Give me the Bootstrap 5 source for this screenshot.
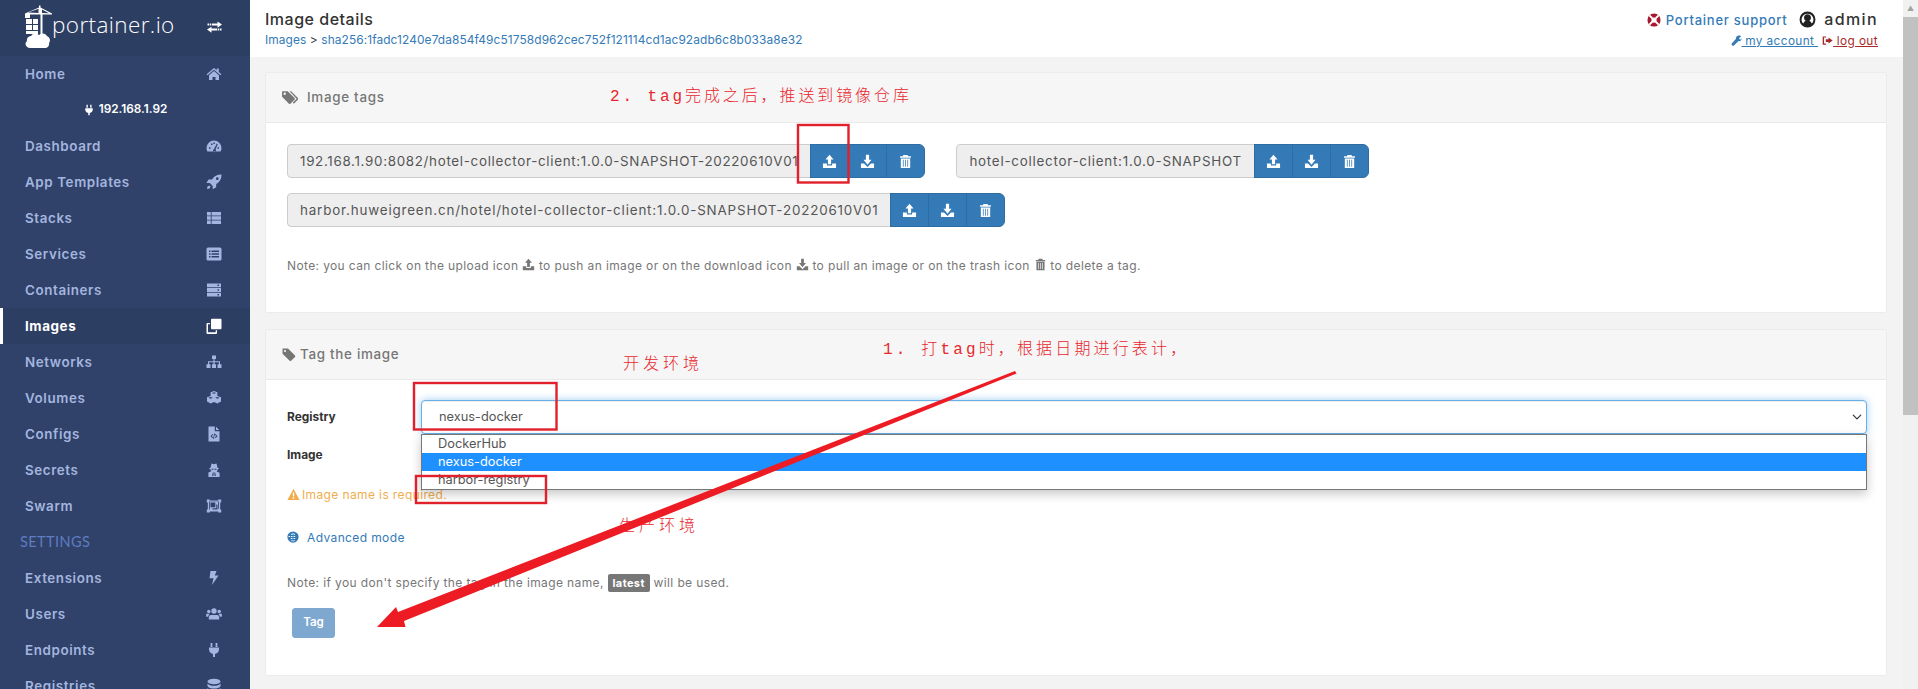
<!DOCTYPE html>
<html lang="en">
<head>
<meta charset="utf-8">
<title>Portainer - Image details</title>
<link href="https://cdn.jsdelivr.net/npm/bootstrap@5.3.0/dist/css/bootstrap.min.css" rel="stylesheet">
<style>
html,body{height:689px;overflow:hidden;margin:0}
body{background:#f3f3f3;font-family:Inter,"Noto Sans",sans-serif;font-size:12px;color:#333;position:relative}
.pt-shell{height:689px}
.pt-side{width:250px;background:#30426a;flex:none;overflow:hidden}
.pt-brand{height:56px;background:#2d3e63;color:#fff;padding-left:25px;padding-right:27px;flex:none}
.pt-brand-name{font-family:"Open Sans",sans-serif;font-weight:300;font-size:22.5px;line-height:1;margin-left:-1px;margin-top:-6px;letter-spacing:.4px}
.pt-item{height:36px;padding:0 28px 0 25px;color:#a4b5df;font-weight:600;font-size:13.4px;letter-spacing:.6px;text-decoration:none;flex:none}
.pt-item svg{width:16px;height:16px;fill:currentColor}
.pt-item.pt-active{background:#2d3e63;color:#fff;border-left:3px solid #fff;padding-left:22px;font-weight:700}
.pt-endpoint{height:36px;color:#fff;font-weight:600;font-size:11.8px;padding-left:0;flex:none}
.pt-endpoint svg{width:12px;height:14px;fill:#fff;margin-right:4px}
.pt-heading{height:36px;padding-left:20px;color:#5e7cc0;font-family:Lato,sans-serif;font-size:14.5px;letter-spacing:.4px;flex:none}
.pt-main{min-width:0}
.pt-top{height:57px;background:#fff;padding:10px 25px 0 15px;flex:none}
.pt-title{font-size:16px;font-weight:500;line-height:18px;color:#333;letter-spacing:.5px}
.pt-crumb{font-size:11.9px;line-height:18px;margin-top:3px;letter-spacing:.1px}
.pt-crumb a,.pt-blue{color:#337ab7;text-decoration:none}
.pt-userline{font-size:13px;line-height:18px;font-weight:500;text-align:right;letter-spacing:.75px}
.pt-admin{font-size:16px;color:#333;margin-left:12px;letter-spacing:1.4px}
.pt-admin svg{width:17px;height:17px;vertical-align:-3px;margin-right:2px}
.pt-links{font-size:11.8px;line-height:18px;margin-top:3px;text-align:right;letter-spacing:.4px}
.pt-links a{color:#337ab7}
.pt-links a.pt-out{color:#a52a2a}
.pt-links svg{width:11px;height:11px;fill:currentColor;vertical-align:-1px;margin-left:4px}
.pt-content{padding:15px 16px 0 15px}
.pt-card{border:1px solid #ececec;border-radius:2px;background:#fff;margin-bottom:16px}
.pt-card .card-header{height:50px;background:#f6f6f6;border-bottom:1px solid #e9e9e9;padding:0 15px;font-weight:500;font-size:13.4px;letter-spacing:.7px;color:#767676;border-radius:0}
.pt-card .card-header svg{width:17px;height:17px;fill:#767676;margin-right:9px}
.pt-card .card-header svg.pt-tag-ico{margin-right:3px;width:16px}
.pt-body-a{height:189px;padding:21px 20px 0 21px}
.pt-body-b{height:295px;padding:20px 19px 0 21px;position:relative}
.pt-tags{row-gap:15px}
.pt-tagrow{column-gap:31px}
.pt-pill{height:34px;font-size:13.4px;letter-spacing:.75px;font-weight:400;background:#eee;border:1px solid #ccc;color:#555;padding:0 12px;border-radius:4px 0 0 4px}
.pt-pill-a{letter-spacing:.68px}
.pt-pill-c{letter-spacing:.83px}
.pt-btn{width:39px;height:34px;padding:0;background:#337ab7;border:1px solid #2e6da4;color:#fff;display:flex;align-items:center;justify-content:center}
.pt-btn svg{width:15px;height:15px;fill:#fff}
.pt-note{font-size:12px;letter-spacing:.38px;color:#777;margin-top:30px;line-height:18px}
.pt-note svg{width:13px;height:13px;fill:#777;vertical-align:-1px}
.pt-label{width:134px;font-weight:700;font-size:11.9px;color:#333;flex:none}
.pt-form-row{height:34px}
.pt-select{height:34px;border:1px solid #66afe9;border-radius:4px;box-shadow:inset 0 1px 1px rgba(0,0,0,.075),0 0 8px rgba(102,175,233,.6);font-size:12.8px;color:#555;padding:0 12px 0 17px;background-size:12px 10px;background-position:right 3px center}
.pt-select:focus{border-color:#66afe9}
.pt-fakeinput{height:34px;border:1px solid #ccc;border-radius:4px}
.pt-pop{position:absolute;left:155px;right:19px;top:54px;background:#fff;border:1px solid #767676;box-shadow:0 4px 10px rgba(0,0,0,.22);font-size:12.8px;color:#555;z-index:2}
.pt-opt{height:18px;line-height:18px;padding-left:16px}
.pt-opt-on{background:#1e90ff;color:#fff}
.pt-warn{color:#f0ad4e;font-size:12px;letter-spacing:.38px;margin-top:14px;line-height:18px}
.pt-warn svg{width:13px;height:13px;fill:#f0ad4e;vertical-align:-2px;margin-right:2px}
.pt-adv{font-size:12px;letter-spacing:.38px;margin-top:25px;line-height:18px}
.pt-adv svg{width:12px;height:12px;fill:#337ab7;vertical-align:-1px;margin-right:8px}
.pt-note-b{font-size:12px;letter-spacing:.38px;color:#777;margin-top:26px;line-height:20px}
.pt-latest{background:#777;color:#fff;font-weight:700;border-radius:2px;padding:2px 5px;font-size:11px}
.pt-tagbtn{margin:15px 0 0 5px;width:43px;height:30px;padding:0;background:#7fa8d0;border:1px solid #7fa8d0;color:#fff;font-size:11.6px;font-weight:600;border-radius:3px;opacity:1}
.pt-scroll{width:15px;background:#f1f1f1;flex:none}
.pt-sup{height:17px;color:#a3a3a3;font-size:7px;line-height:17px;text-align:center}
.pt-thumb{height:398px;background:#c1c1c1}
.pt-ink{position:absolute;left:0;top:0;width:1918px;height:689px;z-index:5;pointer-events:none}
.pt-red{position:absolute;color:#e8262c;font-family:"Liberation Mono","Noto Sans CJK SC",monospace;font-size:16px;font-weight:300;line-height:20px;z-index:6;white-space:nowrap}
.pt-r1{left:610px;top:87px;letter-spacing:2.9px}
.pt-r2{left:883px;top:340px;letter-spacing:3.15px}
.pt-r3{left:623px;top:355px;letter-spacing:4px}
.pt-r4{left:619px;top:517px;letter-spacing:4px}
</style>
</head>
<body>
<svg width="0" height="0" class="position-absolute">
<defs>
<symbol id="i-exchange" viewBox="0 0 16 16"><path d="M1 3.600h1.500v2H1zM3.200 3.600h1.500v2H3.200zM5.400 3.600H11V1.500l4.500 3.100L11 7.700V5.600H5.400zM15 8.600h-1.500v2H15zM12.800 8.600h-1.500v2h1.500zM10.600 8.600H5V6.800L.5 9.600 5 12.700v-2.100h5.600z"/></symbol>
<symbol id="i-home" viewBox="0 0 16 16"><path d="M8 2 .6 8.200l.9 1L8 3.800l6.500 5.400.9-1-2.600-2.200V2.600h-2v1.700zM3 9.300 8 5.100l5 4.200V14H9.500v-3h-3v3H3z"/></symbol>
<symbol id="i-plug" viewBox="0 0 16 16"><path d="M4.600 1h1.800v4H4.600zM9.600 1h1.800v4H9.600zM3 5.500h10v1.800a5 5 0 0 1-4 4.700V15H7v-3A5 5 0 0 1 3 7.300z"/></symbol>
<symbol id="i-tacho" viewBox="0 0 16 16"><path fill-rule="evenodd" d="M8 2.500A7.500 7.500 0 0 0 .5 10c0 1.300.3 2.500.9 3.500h13.200c.6-1 .9-2.200.9-3.500A7.500 7.500 0 0 0 8 2.500zM3 9.200h1.500v1.500H3zM5 5.600h1.500v1.500H5zM7.400 4.500h1.400V6H7.400zM11.500 9.200H13v1.500h-1.500zM10.800 5.500l1 .5-2.300 5.500a1.500 1.500 0 1 1-1.500-.3z"/></symbol>
<symbol id="i-rocket" viewBox="0 0 16 16"><path fill-rule="evenodd" d="M15.500.5c-4.500 0-7.500 1.800-9.500 5H2.500L.5 9h3.300l2.900 2.900v3.400l3.500-2V10c3.700-2.200 5.300-5 5.300-9.500zM11.300 3.300a1.400 1.400 0 1 1 0 2.800 1.400 1.400 0 0 1 0-2.800zM1.500 12.500l2-1 1 1-1 2-2.500.5z"/></symbol>
<symbol id="i-thlist" viewBox="0 0 16 16"><path d="M1 2h3.800v3.500H1zM5.600 2H15v3.500H5.600zM1 6.300h3.800v3.400H1zM5.600 6.300H15v3.400H5.600zM1 10.500h3.800V14H1zM5.600 10.500H15V14H5.600z"/></symbol>
<symbol id="i-listalt" viewBox="0 0 16 16"><path fill-rule="evenodd" d="M2 1.500h12a1.500 1.500 0 0 1 1.500 1.500v10a1.500 1.500 0 0 1-1.500 1.500H2A1.500 1.500 0 0 1 .5 13V3A1.500 1.500 0 0 1 2 1.500zM3 4.500v1.500h1.500V4.500zM3 7.300v1.500h1.500V7.300zM3 10v1.500h1.500V10zM5.500 4.500v1.500H13V4.500zM5.500 7.300v1.500H13V7.300zM5.500 10v1.500H13V10z"/></symbol>
<symbol id="i-server" viewBox="0 0 16 16"><path fill-rule="evenodd" d="M1 1.500h14v3.700H1zM11.500 2.600v1.400H13V2.600zM1 6.100h14v3.800H1zM11.500 7.300v1.400H13V7.300zM1 10.800h14v3.700H1zM11.500 12v1.400H13V12z"/></symbol>
<symbol id="i-clone" viewBox="0 0 16 16"><path fill-rule="evenodd" d="M6 .8h8.500a1 1 0 0 1 1 1v8.400a1 1 0 0 1-1 1H6a1 1 0 0 1-1-1V1.800a1 1 0 0 1 1-1zM1.500 5H4v1.300H2v7.900h7.700v-2h1.300v2.800a1 1 0 0 1-1 1H1.500a1 1 0 0 1-1-1V6a1 1 0 0 1 1-1z"/></symbol>
<symbol id="i-sitemap" viewBox="0 0 16 16"><path d="M6 1.500h4V5H8.600v2.200H14v3h1.500V14h-4v-3.800h1.400V8.300H8.600v1.900H10V14H6v-3.800h1.400V8.300H3.100v1.900h1.400V14h-4v-3.800H2v-3h5.400V5H6z"/></symbol>
<symbol id="i-cubes" viewBox="0 0 16 16"><path fill-rule="evenodd" d="M8 1l3.400 1.300v3.600L15 7.200v4.300l-3.700 2L8 11.900l-3.300 1.600-3.700-2V7.200l3.600-1.300V2.300zM8 2.200 5.800 3 8 3.800 10.200 3zM4.600 7 2.400 7.800 4.600 8.700l2.200-.9zM11.400 7 9.200 7.800l2.200.9 2.200-.9z"/></symbol>
<symbol id="i-file" viewBox="0 0 16 16"><path fill-rule="evenodd" d="M2.500.5h6.300v4.700h4.700v10.300h-11zM10 .8l3.200 3.200H10zM6.500 8 4.500 10.200l2 2.100.7-.6-1.400-1.500 1.400-1.600zM9.500 8l-.7.600 1.400 1.600-1.400 1.500.7.600 2-2.100zM8.300 7.500 7 13h.8l1.300-5.500z"/></symbol>
<symbol id="i-secret" viewBox="0 0 16 16"><path fill-rule="evenodd" d="M5.500 1.500 8 2.300l2.500-.8 1 4.300 1.700.7-1.400.8c-.2 1-.6 1.700-1.200 2.200l3 1.200V15H2.400v-4.500l3-1.200c-.6-.5-1-1.200-1.200-2.200L2.800 6.500l1.700-.7zM5.500 6.800v1h2v-1zM8.500 6.800v1h2v-1zM6.800 10.500 6.200 14h1.200l.3-3.500zM8.300 10.500l.3 3.500h1.200l-.6-3.500z"/></symbol>
<symbol id="i-ungroup" viewBox="0 0 16 16"><path fill-rule="evenodd" d="M.8 1.500h3v1h8.400v-1h3v3h-1v7h1v3h-3v-1H3.800v1h-3v-3h1v-7h-1zM3 3.500v8h.8V11h-.1v-.1h.1V3.800h8.400v6.900h.8V3.500zM4.500 4.500v4.800h4.800V4.500zM10.300 6.500v3.800H6.500v1.200h5V6.500z"/></symbol>
<symbol id="i-bolt" viewBox="0 0 16 16"><path d="M4.500 1h6L8.800 5.500h3.700L6 15l1.500-6.800H3.500z"/></symbol>
<symbol id="i-users" viewBox="0 0 16 16"><circle cx="8" cy="5" r="2.700"/><circle cx="2.800" cy="5.500" r="1.700"/><circle cx="13.200" cy="5.500" r="1.700"/><path d="M4.500 9h7a2 2 0 0 1 1.700 2v2.500H2.800V11A2 2 0 0 1 4.500 9zM.2 7.800h3.200L2 10.800H.2zM15.800 7.800h-3.200l1.400 3h1.800z"/></symbol>
<symbol id="i-db" viewBox="0 0 16 16"><ellipse cx="8" cy="3.500" rx="6.500" ry="2.800"/><path d="M1.500 5.500c1 1.600 3.500 2.300 6.500 2.300s5.500-.7 6.500-2.300v2.700c-1 1.600-3.500 2.300-6.500 2.300s-5.500-.7-6.500-2.300zM1.500 10c1 1.600 3.500 2.300 6.500 2.300s5.500-.7 6.500-2.300v2.700c-1 1.500-3.500 2.300-6.500 2.300s-5.500-.8-6.500-2.300z"/></symbol>
<symbol id="i-tags" viewBox="0 0 16 16"><path fill-rule="evenodd" d="M1 2h5.300l6.500 6.500a1 1 0 0 1 0 1.400l-3.900 3.900a1 1 0 0 1-1.400 0L1 7.300zM3.500 3.400a1.100 1.100 0 1 0 0 2.200 1.100 1.100 0 0 0 0-2.200z"/><path d="M8 2h1.500L16 8.500a1 1 0 0 1 0 1.400l-3.900 3.900-1-1 3.600-3.600z"/></symbol>
<symbol id="i-tag" viewBox="0 0 16 16"><path fill-rule="evenodd" d="M1.500 2H7l7 7a1 1 0 0 1 0 1.400l-3.900 3.900a1 1 0 0 1-1.400 0l-7.200-7.100zM4 3.400a1.100 1.100 0 1 0 0 2.200 1.100 1.100 0 0 0 0-2.200z"/></symbol>
<symbol id="i-up" viewBox="0 0 16 16"><path d="M8 .8 12.300 5.800H9.700V11H6.300V5.800H3.700zM1 10h4.200v2.300h5.600V10H15v5H1z"/></symbol>
<symbol id="i-down" viewBox="0 0 16 16"><path d="M6.300 .8h3.400V6h2.600L8 11.500 3.700 6h2.600zM1 10h3.300L8 13.800 11.700 10H15v5H1z"/></symbol>
<symbol id="i-trash" viewBox="0 0 16 16"><path fill-rule="evenodd" d="M5.800 1h4.400l.6 1.500h3v1.400H2.200V2.500h3zM3 4.700h10V15H3zM5.200 6v7.500h.8V6zM7.600 6v7.500h.8V6zM10 6v7.500h.8V6z"/></symbol>
<symbol id="i-wrench" viewBox="0 0 16 16"><path d="M15 1.500 12 4.200l.2 2 2 .3 1.300-1.800c.3 2.800-2 4.800-4.500 4.200L4.500 15a1.800 1.800 0 0 1-3-3L7.300 5.300C6.800 2.500 9.500.2 12.500.8z"/></symbol>
<symbol id="i-out" viewBox="0 0 16 16"><path d="M1 2h5v1.800H3v8.400h3V14H1zM9.500 3.500 15.500 8l-6 4.500V10H5.500V6h4z"/></symbol>
<symbol id="i-globe" viewBox="0 0 16 16"><path fill-rule="evenodd" d="M8 .5a7.500 7.500 0 1 1 0 15 7.500 7.500 0 0 1 0-15zM7.300 2.200c-.8.600-1.500 1.700-1.900 3h1.900zM8.700 2.200v3h1.900c-.4-1.300-1.100-2.400-1.900-3zM4 6.600c-.1.500-.1.900-.1 1.400h-2c0-.5.100-1 .3-1.400zM5.200 6.600c-.1.500-.1.900-.1 1.400h2.200V6.600zM8.700 6.600V8h2.200c0-.5 0-.9-.1-1.400zM5.100 9.400c0 .5.100.9.200 1.400h2V9.400zM8.700 9.400v1.400h2c.1-.5.200-.9.200-1.400zM5.500 12c.4 1 1 1.700 1.800 2.200V12zM8.700 12v2.200c.8-.5 1.400-1.200 1.800-2.200z"/></symbol>
<symbol id="i-warn" viewBox="0 0 16 16"><path fill-rule="evenodd" d="M8 1 15.500 14.800H.5zM7 5.500l.3 5h1.400l.3-5zM7.100 11.500v1.700h1.800v-1.700z"/></symbol>
<symbol id="i-ring" viewBox="0 0 16 16"><circle cx="8" cy="8" r="7.500" fill="#a5192e"/><circle cx="8" cy="8" r="3" fill="#fff"/><path d="M2.700 2.700 6 6M13.300 2.700 10 6M2.700 13.300 6 10M13.300 13.300 10 10" stroke="#fff" stroke-width="2.200"/></symbol>
<symbol id="i-user" viewBox="0 0 16 16"><path fill-rule="evenodd" fill="#222" d="M8 .5a7.500 7.500 0 1 1 0 15 7.500 7.500 0 0 1 0-15zM8 2.500a5.500 5.500 0 0 0-4 9.300c.6-1.500 1.500-2.300 2.300-2.600A3.300 3.300 0 1 1 9.700 9.200c.8.300 1.700 1.100 2.300 2.600A5.500 5.500 0 0 0 8 2.500z"/></symbol>
</defs>
</svg>

<div class="d-flex pt-shell">
  <nav class="pt-side d-flex flex-column">
    <div class="pt-brand d-flex align-items-center justify-content-between">
      <div class="d-flex align-items-center">
        <svg width="28" height="46" viewBox="0 0 28 46" fill="#fff"><path d="M0 8.500 14 2.500l0-2h1.500v2L27 8.500v1H17.500V32H15.500V9.500H5v3.500H0zM3 7.500l10.500.5V3.800zM17 4.500V8l7 .3z" fill-rule="evenodd"/><path d="M1 14h6v5H1zM8 14h5v5H8zM1 20h6v5H1zM8 20h5v5H8zM1 26h12v3H1z" fill-rule="evenodd"/><path d="M6 29a5 5 0 0 1 8-1 5 5 0 0 1 8 1 4.500 4.500 0 0 1 2 7 4 4 0 0 1-4 5H5a4 4 0 0 1-3-7 4 4 0 0 1 4-5z" transform="translate(0 2)"/></svg>
        <div class="pt-brand-name">portainer.io</div>
      </div>
      <svg width="17" height="16" fill="#fff"><use href="#i-exchange"/></svg>
    </div>
    <a class="pt-item d-flex align-items-center justify-content-between">Home<svg><use href="#i-home"/></svg></a>
    <div class="pt-endpoint d-flex align-items-center justify-content-center"><svg viewBox="0 0 16 16"><use href="#i-plug"/></svg>192.168.1.92</div>
    <a class="pt-item d-flex align-items-center justify-content-between">Dashboard<svg><use href="#i-tacho"/></svg></a>
    <a class="pt-item d-flex align-items-center justify-content-between">App Templates<svg><use href="#i-rocket"/></svg></a>
    <a class="pt-item d-flex align-items-center justify-content-between">Stacks<svg><use href="#i-thlist"/></svg></a>
    <a class="pt-item d-flex align-items-center justify-content-between">Services<svg><use href="#i-listalt"/></svg></a>
    <a class="pt-item d-flex align-items-center justify-content-between">Containers<svg><use href="#i-server"/></svg></a>
    <a class="pt-item pt-active d-flex align-items-center justify-content-between">Images<svg><use href="#i-clone"/></svg></a>
    <a class="pt-item d-flex align-items-center justify-content-between">Networks<svg><use href="#i-sitemap"/></svg></a>
    <a class="pt-item d-flex align-items-center justify-content-between">Volumes<svg><use href="#i-cubes"/></svg></a>
    <a class="pt-item d-flex align-items-center justify-content-between">Configs<svg><use href="#i-file"/></svg></a>
    <a class="pt-item d-flex align-items-center justify-content-between">Secrets<svg><use href="#i-secret"/></svg></a>
    <a class="pt-item d-flex align-items-center justify-content-between">Swarm<svg><use href="#i-ungroup"/></svg></a>
    <div class="pt-heading d-flex align-items-center">SETTINGS</div>
    <a class="pt-item d-flex align-items-center justify-content-between">Extensions<svg><use href="#i-bolt"/></svg></a>
    <a class="pt-item d-flex align-items-center justify-content-between">Users<svg><use href="#i-users"/></svg></a>
    <a class="pt-item d-flex align-items-center justify-content-between">Endpoints<svg><use href="#i-plug"/></svg></a>
    <a class="pt-item d-flex align-items-center justify-content-between">Registries<svg><use href="#i-db"/></svg></a>
  </nav>

  <main class="pt-main flex-grow-1 d-flex flex-column">
    <header class="pt-top d-flex justify-content-between">
      <div>
        <div class="pt-title">Image details</div>
        <div class="pt-crumb"><a href="#">Images</a> &gt; <a href="#">sha256:1fadc1240e7da854f49c51758d962cec752f121114cd1ac92adb6c8b033a8e32</a></div>
      </div>
      <div>
        <div class="pt-userline"><svg width="14" height="14" style="vertical-align:-2px;margin-right:5px"><use href="#i-ring"/></svg><span class="pt-blue">Portainer support</span><span class="pt-admin"><svg><use href="#i-user"/></svg> admin</span></div>
        <div class="pt-links"><a href="#"><svg><use href="#i-wrench"/></svg> my account </a><a href="#" class="pt-out"><svg><use href="#i-out"/></svg> log out</a></div>
      </div>
    </header>
    <div class="pt-content">
      <section class="card pt-card">
        <div class="card-header d-flex align-items-center"><svg><use href="#i-tags"/></svg>Image tags</div>
        <div class="card-body pt-body-a">
          <div class="d-flex flex-column pt-tags">
            <div class="d-flex pt-tagrow">
              <div class="input-group w-auto flex-nowrap">
                <span class="input-group-text pt-pill pt-pill-a">192.168.1.90:8082/hotel-collector-client:1.0.0-SNAPSHOT-20220610V01</span>
                <button class="btn btn-primary pt-btn" type="button"><svg><use href="#i-up"/></svg></button>
                <button class="btn btn-primary pt-btn" type="button"><svg><use href="#i-down"/></svg></button>
                <button class="btn btn-primary pt-btn" type="button"><svg><use href="#i-trash"/></svg></button>
              </div>
              <div class="input-group w-auto flex-nowrap">
                <span class="input-group-text pt-pill">hotel-collector-client:1.0.0-SNAPSHOT</span>
                <button class="btn btn-primary pt-btn" type="button"><svg><use href="#i-up"/></svg></button>
                <button class="btn btn-primary pt-btn" type="button"><svg><use href="#i-down"/></svg></button>
                <button class="btn btn-primary pt-btn" type="button"><svg><use href="#i-trash"/></svg></button>
              </div>
            </div>
            <div class="d-flex pt-tagrow">
              <div class="input-group w-auto flex-nowrap">
                <span class="input-group-text pt-pill pt-pill-c">harbor.huweigreen.cn/hotel/hotel-collector-client:1.0.0-SNAPSHOT-20220610V01</span>
                <button class="btn btn-primary pt-btn" type="button"><svg><use href="#i-up"/></svg></button>
                <button class="btn btn-primary pt-btn" type="button"><svg><use href="#i-down"/></svg></button>
                <button class="btn btn-primary pt-btn" type="button"><svg><use href="#i-trash"/></svg></button>
              </div>
            </div>
          </div>
          <p class="pt-note mb-0">Note: you can click on the upload icon <svg><use href="#i-up"/></svg> to push an image or on the download icon <svg><use href="#i-down"/></svg> to pull an image or on the trash icon <svg><use href="#i-trash"/></svg> to delete a tag.</p>
        </div>
      </section>
      <section class="card pt-card">
        <div class="card-header d-flex align-items-center"><svg class="pt-tag-ico"><use href="#i-tag"/></svg>Tag the image</div>
        <div class="card-body pt-body-b">
          <div class="d-flex align-items-center pt-form-row">
            <label class="pt-label">Registry</label>
            <select class="form-select pt-select"><option>nexus-docker</option></select>
          </div>
          <div class="d-flex align-items-center pt-form-row mt-1">
            <label class="pt-label">Image</label>
            <div class="pt-fakeinput flex-grow-1"></div>
          </div>
          <div class="pt-pop">
            <div class="pt-opt">DockerHub</div>
            <div class="pt-opt pt-opt-on">nexus-docker</div>
            <div class="pt-opt">harbor-registry</div>
          </div>
          <div class="pt-warn"><svg><use href="#i-warn"/></svg>Image name is required.</div>
          <div class="pt-adv"><a href="#" class="pt-blue"><svg><use href="#i-globe"/></svg>Advanced mode</a></div>
          <div class="pt-note-b">Note: if you don't specify the tag in the image name, <span class="pt-latest">latest</span> will be used.</div>
          <button class="btn pt-tagbtn" type="button">Tag</button>
        </div>
      </section>
    </div>
  </main>

  <div class="pt-scroll"><div class="pt-sup">▲</div><div class="pt-thumb"></div></div>
</div>

<svg class="pt-ink" viewBox="0 0 1918 689" fill="none">
  <rect x="798" y="125" width="50.500" height="57.500" stroke="#e2202c" stroke-width="2.400"/>
  <rect x="414" y="383" width="142.500" height="46.500" stroke="#e2202c" stroke-width="2.400"/>
  <rect x="416" y="476" width="130" height="27" stroke="#e2202c" stroke-width="2.400"/>
  <path d="M1015 371 1016.500 373.500 404 621 405.500 627 377 627 396 607 398 612Z" fill="#ed1c24"/>
</svg>
<div class="pt-red pt-r1">2. tag完成之后&#xFF0C;推送到镜像仓库</div>
<div class="pt-red pt-r2">1. 打tag时&#xFF0C;根据日期进行表计&#xFF0C;</div>
<div class="pt-red pt-r3">开发环境</div>
<div class="pt-red pt-r4">生产环境</div>

<script src="https://cdn.jsdelivr.net/npm/bootstrap@5.3.0/dist/js/bootstrap.bundle.min.js"></script>
</body>
</html>
